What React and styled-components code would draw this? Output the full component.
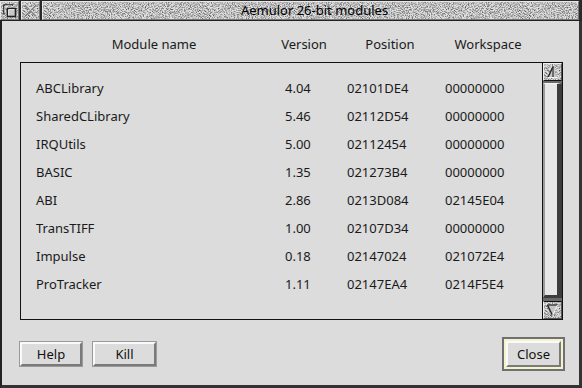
import React from "react";
import styled, { createGlobalStyle } from "styled-components";

const noiseSvg = `<svg xmlns='http://www.w3.org/2000/svg' width='160' height='160'><filter id='n' x='0' y='0' color-interpolation-filters='sRGB'><feTurbulence type='fractalNoise' baseFrequency='1.05' numOctaves='2' stitchTiles='stitch'/><feColorMatrix type='matrix' values='2.2 0 0 0 -0.36  2.2 0 0 0 -0.36  2.2 0 0 0 -0.36  0 0 0 0 0.55'/></filter><rect width='160' height='160' filter='url(#n)'/></svg>`;
const noise = `url("data:image/svg+xml,${encodeURIComponent(noiseSvg)}")`;

const GlobalStyle = createGlobalStyle`
  html, body { margin: 0; padding: 0; background: #dcdcdc; }
  body { font-family: "Noto Sans", "Open Sans", sans-serif; }
`;

const Window = styled.div`
  width: 582px;
  height: 388px;
  display: flex;
  flex-direction: column;
  box-sizing: border-box;
  background: #222;
`;

const TitleBar = styled.div`
  height: 19px;
  display: flex;
  gap: 2px;
  padding-top: 1px;
  padding-right: 3px;
  border-bottom: 1px solid #222;
  background: #2a2a2a;
`;

const TitleButton = styled.div`
  width: 17px;
  height: 17px;
  box-sizing: content-box;
  border-top: 1px solid #e8e8e8;
  border-left: 1px solid #e8e8e8;
  border-bottom: 1px solid #777;
  border-right: 1px solid #777;
  background-color: #bcbcbc;
  background-image: ${noise};
  display: flex;
  align-items: center;
  justify-content: center;
`;

const TitleText = styled.div`
  flex: 1;
  box-sizing: border-box;
  border-top: 1px solid #e8e8e8;
  border-left: 1px solid #e8e8e8;
  border-bottom: 1px solid #777;
  border-right: 1px solid #777;
  background-color: #bcbcbc;
  background-image: ${noise};
  display: flex;
  align-items: center;
  justify-content: center;
  font-size: 13px;
  color: #000;
  padding-left: 8px;
  line-height: 1;
`;

const Body = styled.div`
  flex: 1;
  background: #dcdcdc;
  border-left: 2px solid #222;
  border-right: 3px solid #333;
  border-bottom: 3px solid #333;
  padding: 14px 14px 14px 18px;
  display: flex;
  flex-direction: column;
  font-size: 13px;
  color: #000;
`;

const HeaderRow = styled.div`
  display: grid;
  grid-template-columns: 256px 44px 128px 68px;
  padding-left: 6px;
  height: 18px;
  align-items: center;
  justify-items: center;
  white-space: nowrap;
  color: #1a1a1a;
`;

const ListFrame = styled.div`
  margin-top: 9px;
  margin-right: 2px;
  height: 258px;
  box-sizing: border-box;
  border: 1px solid #111;
  display: flex;
`;

const ListArea = styled.div`
  flex: 1;
  border-right: 1px solid #111;
  padding-top: 11px;
  display: flex;
  flex-direction: column;
`;

const Row = styled.div`
  display: grid;
  grid-template-columns: 249px 62px 98px 1fr;
  padding-left: 15px;
  height: 28px;
  align-items: center;
  white-space: nowrap;
  color: #1a1a1a;
`;

const ScrollBar = styled.div`
  width: 19px;
  display: flex;
  flex-direction: column;
  background: #6a6a6a;
`;

const ArrowBox = styled.div`
  height: 18px;
  box-sizing: border-box;
  border-top: 1px solid #f0f0f0;
  border-left: 1px solid #f0f0f0;
  border-bottom: 1px solid #555;
  border-right: 1px solid #555;
  background-color: #bcbcbc;
  background-image: ${noise};
  display: flex;
  align-items: center;
  justify-content: center;
  ${(p) => (p.$bottom ? "border-top-color: #111; margin-top: 1px;" : "border-bottom-color: #111;")}
`;

const Well = styled.div`
  flex: 1;
  padding: 2px 0 2px 0;
  display: flex;
`;

const Thumb = styled.div`
  flex: 1;
  box-sizing: border-box;
  background: #e6e6e6;
  border-left: 2px solid #9a9a9a;
  border-top: 1px solid #f4f4f4;
  border-right: 5px solid #3c3c3c;
  border-bottom: 3px solid #3c3c3c;
`;

const ButtonRow = styled.div`
  margin-top: auto;
  display: flex;
  align-items: center;
  gap: 11px;
`;

const Button = styled.button`
  width: ${(p) => p.$w}px;
  height: 24px;
  box-sizing: border-box;
  font-family: inherit;
  font-size: 13px;
  color: #111;
  background: #dcdcdc;
  border-top: 2px solid #fafafa;
  border-left: 2px solid #fafafa;
  border-bottom: 2px solid #7a7a7a;
  border-right: 2px solid #7a7a7a;
  outline: 1px solid #9a9a9a;
  padding: 0;
  display: flex;
  align-items: center;
  justify-content: center;
`;

const DefaultRing = styled.div`
  margin-left: auto;
  width: 63px;
  height: 34px;
  box-sizing: border-box;
  border: 2px solid #707070;
  padding: 2px;
  background: #f3f3cc;
  display: flex;
`;

const DefaultButton = styled(Button)`
  flex: 1;
  width: auto;
  height: auto;
  outline: none;
`;

const modules = [
  ["ABCLibrary", "4.04", "02101DE4", "00000000"],
  ["SharedCLibrary", "5.46", "02112D54", "00000000"],
  ["IRQUtils", "5.00", "02112454", "00000000"],
  ["BASIC", "1.35", "021273B4", "00000000"],
  ["ABI", "2.86", "0213D084", "02145E04"],
  ["TransTIFF", "1.00", "02107D34", "00000000"],
  ["Impulse", "0.18", "02147024", "021072E4"],
  ["ProTracker", "1.11", "02147EA4", "0214F5E4"],
];

const BackIcon = () => (
  <svg width="17" height="17" viewBox="0 0 17 17">
    <path d="M3 12 V3 H12" fill="none" stroke="#222" strokeWidth="1.6" />
    <path d="M3.8 11.2 V3.8 H11.2" fill="none" stroke="#f4f4f4" strokeWidth="0.8" />
    <rect x="6.5" y="6.5" width="8" height="8" fill="#c8c8c8" stroke="#222" strokeWidth="1.6" />
    <path d="M7.6 13.4 V7.6 H13.4" fill="none" stroke="#f4f4f4" strokeWidth="0.9" />
  </svg>
);

const CloseIcon = () => (
  <svg width="17" height="17" viewBox="0 0 17 17">
    <path d="M3 3 L14 14 M14 3 L3 14" stroke="#7a7a7a" strokeWidth="1.6" />
    <path d="M3 2.2 L14.5 13.7 M13.8 2.2 L2.3 13.7" stroke="#eeeeee" strokeWidth="0.7" />
  </svg>
);

const UpArrow = () => (
  <svg width="17" height="16" viewBox="0 0 17 16">
    <polygon points="9,2.5 4,13.5 13.5,13.5" fill="#c4c4c4" />
    <path d="M9 2.5 L4 13.5" stroke="#222" strokeWidth="1.3" />
    <path d="M4 13.5 H13.5" stroke="#f4f4f4" strokeWidth="1" />
    <path d="M9 2.5 V13" stroke="#333" strokeWidth="1.2" />
  </svg>
);

const DownArrow = () => (
  <svg width="17" height="16" viewBox="0 0 17 16">
    <polygon points="3.5,3 13.5,3 8.5,13.5" fill="#c4c4c4" />
    <path d="M3.5 3 H13.5" stroke="#222" strokeWidth="1.2" />
    <path d="M3.5 3 L8.5 13.5" stroke="#222" strokeWidth="1.3" />
    <path d="M13.5 3 L8.5 13.5" stroke="#f4f4f4" strokeWidth="1" />
  </svg>
);

export default function App() {
  return (
    <>
      <GlobalStyle />
      <Window>
        <TitleBar>
          <TitleButton>
            <BackIcon />
          </TitleButton>
          <TitleButton>
            <CloseIcon />
          </TitleButton>
          <TitleText>Aemulor 26-bit modules</TitleText>
        </TitleBar>
        <Body>
          <HeaderRow>
            <span>Module name</span>
            <span>Version</span>
            <span>Position</span>
            <span>Workspace</span>
          </HeaderRow>
          <ListFrame>
            <ListArea>
              {modules.map((m) => (
                <Row key={m[0]}>
                  <span>{m[0]}</span>
                  <span>{m[1]}</span>
                  <span>{m[2]}</span>
                  <span>{m[3]}</span>
                </Row>
              ))}
            </ListArea>
            <ScrollBar>
              <ArrowBox>
                <UpArrow />
              </ArrowBox>
              <Well>
                <Thumb />
              </Well>
              <ArrowBox $bottom>
                <DownArrow />
              </ArrowBox>
            </ScrollBar>
          </ListFrame>
          <ButtonRow>
            <Button $w={62}>Help</Button>
            <Button $w={63}>Kill</Button>
            <DefaultRing>
              <DefaultButton>Close</DefaultButton>
            </DefaultRing>
          </ButtonRow>
        </Body>
      </Window>
    </>
  );
}
